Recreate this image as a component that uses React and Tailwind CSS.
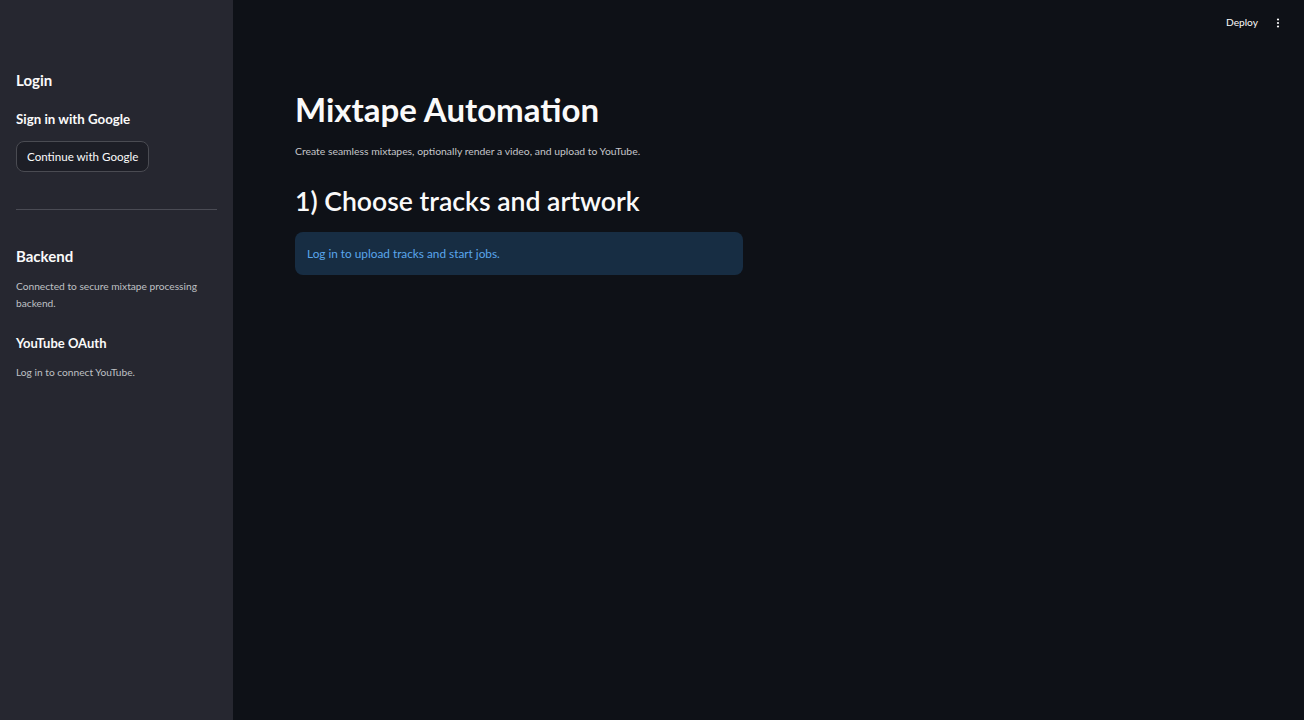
import React from 'react';

const font = { fontFamily: 'Lato, "Noto Sans", sans-serif' };

function Sidebar() {
    return (
        <aside className="w-[233px] shrink-0 bg-[#262730] text-[#fafafa] px-4 pt-[69px]">
            <h3 className="text-[15px] font-bold leading-[22px]">Login</h3>
            <h4 className="mt-[18px] text-[13.3px] font-bold leading-5">Sign in with Google</h4>
            <button className="mt-3 h-[31px] px-[10px] rounded-lg border border-[#4a4b52] bg-[#1d1e26] text-[11.6px] text-[#fafafa]">
                Continue with Google
            </button>
            <hr className="mt-[37px] border-0 border-t border-[#4a4b54]" />
            <h3 className="mt-[35px] text-[15px] font-bold leading-[22px]">Backend</h3>
            <p className="mt-[11px] text-[10.2px] leading-[17px] text-[#bfc0c4]">
                Connected to secure mixtape processing backend.
            </p>
            <h4 className="mt-[21px] text-[13px] font-bold leading-5">YouTube OAuth</h4>
            <p className="mt-[11px] text-[10.2px] leading-[17px] text-[#bfc0c4]">Log in to connect YouTube.</p>
        </aside>
    );
}

export default function App() {
    return (
        <div className="flex w-[1304px] h-[720px] overflow-hidden bg-[#0e1117]" style={font}>
            <Sidebar />
            <main className="flex-1 flex flex-col">
                {/* Header */}
                <header className="h-[46px] flex items-center justify-end gap-[14px] pr-[20px] text-[#fafafa]">
                    <span className="text-[10.2px]">Deploy</span>
                    <svg width="12" height="14" viewBox="0 0 24 24" fill="#fafafa">
                        <circle cx="12" cy="5" r="2.2" />
                        <circle cx="12" cy="12" r="2.2" />
                        <circle cx="12" cy="19" r="2.2" />
                    </svg>
                </header>

                <div className="pl-[62px] w-[520px] pt-[41px]">
                    <h1 className="text-[33px] font-bold leading-[44px] text-[#fafafa]">Mixtape Automation</h1>
                    <p className="mt-3 text-[10.4px] leading-4 text-[#c5c6ca]">
                        Create seamless mixtapes, optionally render a video, and upload to YouTube.
                    </p>
                    <h2 className="mt-6 text-[26.6px] font-semibold leading-9 text-[#fafafa]">
                        1) Choose tracks and artwork
                    </h2>
                    <div className="mt-[13px] h-[43px] w-[448px] rounded-lg bg-[#172d43] px-3 flex items-center">
                        <span className="text-[11.8px] text-[#5aa6ec]">Log in to upload tracks and start jobs.</span>
                    </div>
                </div>
            </main>
        </div>
    );
}
